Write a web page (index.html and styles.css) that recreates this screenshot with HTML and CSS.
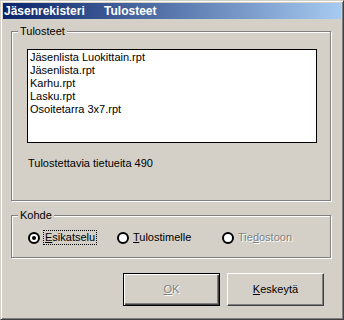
FILE: index.html
```html
<!DOCTYPE html>
<html lang="fi">
<head>
    <meta charset="UTF-8">
    <title>Tulosteet</title>
    <link rel="stylesheet" href="styles.css">
</head>
<body>
    <div class="window">
        <div class="titlebar">
            <span>Jäsenrekisteri</span>
            <span class="title-sub">Tulosteet</span>
        </div>

        <fieldset class="group group-reports">
            <legend>Tulosteet</legend>
            <div class="group-body">
                <ul class="listbox">
                    <li>Jäsenlista Luokittain.rpt</li>
                    <li>Jäsenlista.rpt</li>
                    <li>Karhu.rpt</li>
                    <li>Lasku.rpt</li>
                    <li>Osoitetarra 3x7.rpt</li>
                </ul>
                <p class="count">Tulostettavia tietueita 490</p>
            </div>
        </fieldset>

        <fieldset class="group group-target">
            <legend>Kohde</legend>
            <div class="radios">
                <label class="radio checked">
                    <span class="dot"></span>
                    <span class="focus"><u>E</u>sikatselu</span>
                </label>
                <label class="radio">
                    <span class="dot"></span>
                    <span><u>T</u>ulostimelle</span>
                </label>
                <label class="radio disabled">
                    <span class="dot"></span>
                    <span>Tie<u>d</u>ostoon</span>
                </label>
            </div>
        </fieldset>

        <div class="buttons">
            <button class="btn btn-default" disabled><u>O</u>K</button>
            <button class="btn"><u>K</u>eskeytä</button>
        </div>
    </div>
</body>
</html>
```

FILE: styles.css
```css
/* Dialog in classic Windows look */
body {
    margin: 0;
    font-family: 'Liberation Sans', Arial, sans-serif;
    font-size: 11px;
    line-height: 13px;
    color: #000;
}

.window {
    width: 344px;
    height: 320px;
    box-sizing: border-box;
    background: #d4d0c8;
    border: 1px solid;
    border-color: #d4d0c8 #404040 #404040 #d4d0c8;
    box-shadow: inset 1px 1px 0 #fff, inset -1px -1px 0 #808080;
    padding: 2px;
    display: flex;
    flex-direction: column;
}

.titlebar {
    height: 16px;
    background: linear-gradient(to right, #0a246a, #a6caf0);
    color: white;
    font-weight: bold;
    font-size: 12px;
    line-height: 16px;
    padding-left: 1px;
    white-space: nowrap;
}

.title-sub {
    margin-left: 16px;
}

/* Group boxes */
.group {
    margin: 0 0 0 8px;
    padding: 0;
    width: 320px;
    box-sizing: border-box;
    min-inline-size: 0;
    border: 1px solid #808080;
    box-shadow: inset 1px 1px 0 #fff, 1px 1px 0 #fff;
}

.group legend {
    margin-left: 6px;
    padding: 0 2px;
    background: #d4d0c8;
    line-height: 13px;
}

.group-reports {
    margin-top: 6px;
    height: 176px;
}

.group-body {
    padding: 11px 0 0 15px;
}

.listbox {
    list-style: none;
    margin: 0;
    padding: 1px 2px;
    width: 290px;
    height: 94px;
    box-sizing: border-box;
    background: white;
    border: 1px solid #000;
}

.count {
    margin: 14px 0 0 1px;
}

.group-target {
    margin-top: 8px;
    height: 49px;
}

.radios {
    display: flex;
    padding: 9px 0 0 16px;
}

.radio {
    display: flex;
    align-items: center;
    gap: 4px;
}

.radio:nth-child(1) {
    width: 89px;
}

.radio:nth-child(2) {
    width: 105px;
}

.dot {
    width: 12px;
    height: 12px;
    box-sizing: border-box;
    border-radius: 50%;
    border: 2px solid #000;
    background: white;
    display: flex;
    align-items: center;
    justify-content: center;
}

.checked .dot::after {
    content: "";
    width: 4px;
    height: 4px;
    border-radius: 50%;
    background: #000;
}

.focus {
    outline: 1px dotted #000;
    outline-offset: 0;
    padding: 0 1px;
}

.disabled span:last-child {
    color: #808080;
    text-shadow: 1px 1px 0 #fff;
}

/* Buttons */
.buttons {
    display: flex;
    gap: 7px;
    margin: 15px 0 0 120px;
}

.btn {
    width: 97px;
    height: 33px;
    box-sizing: border-box;
    font: inherit;
    color: #000;
    background: #d4d0c8;
    border: 1px solid;
    border-color: #fff #404040 #404040 #fff;
    box-shadow: inset -1px -1px 0 #808080;
    padding: 0;
}

.btn-default {
    border-color: #000;
    box-shadow: inset 1px 1px 0 #fff, inset -1px -1px 0 #404040, inset -2px -2px 0 #808080;
}

.btn:disabled {
    color: #808080;
    text-shadow: 1px 1px 0 #fff;
}
```
